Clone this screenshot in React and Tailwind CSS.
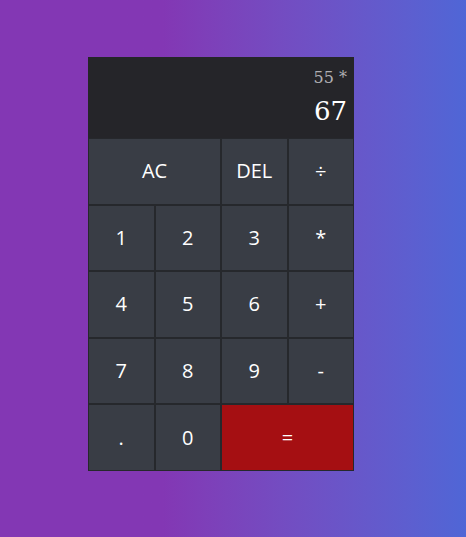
import React from "react";

const keys = [
    { label: "AC", span: true },
    { label: "DEL" },
    { label: "÷" },
    { label: "1" },
    { label: "2" },
    { label: "3" },
    { label: "*" },
    { label: "4" },
    { label: "5" },
    { label: "6" },
    { label: "+" },
    { label: "7" },
    { label: "8" },
    { label: "9" },
    { label: "-" },
    { label: "." },
    { label: "0" },
    { label: "=", span: true, accent: true },
];

export default function App() {
    return (
        <div className="min-h-[537px] w-full bg-gradient-to-r from-[#8337b4] from-35% to-[#4f66d6] pl-[88px] pt-[57px]">
            <div className="grid w-[266px] grid-cols-4 grid-rows-[81px_repeat(5,66.6px)]">
                <div className="col-span-4 flex flex-col items-end bg-[#252529] pr-[7px] pt-[13px] font-['DejaVu_Serif',serif]">
                    <div className="text-[16px] leading-none text-[#b0b0b3]">55 *</div>
                    <div className="mt-[12px] text-[26px] leading-none text-white">67</div>
                </div>
                {keys.map((k) => (
                    <button
                        key={k.label}
                        className={
                            "flex items-center justify-center border border-[#26282c] font-['Open_Sans',sans-serif] text-[20px] text-white " +
                            (k.span ? "col-span-2 " : "") +
                            (k.accent ? "bg-[#a50f12]" : "bg-[#393d45]")
                        }
                    >
                        {k.label}
                    </button>
                ))}
            </div>
        </div>
    );
}
